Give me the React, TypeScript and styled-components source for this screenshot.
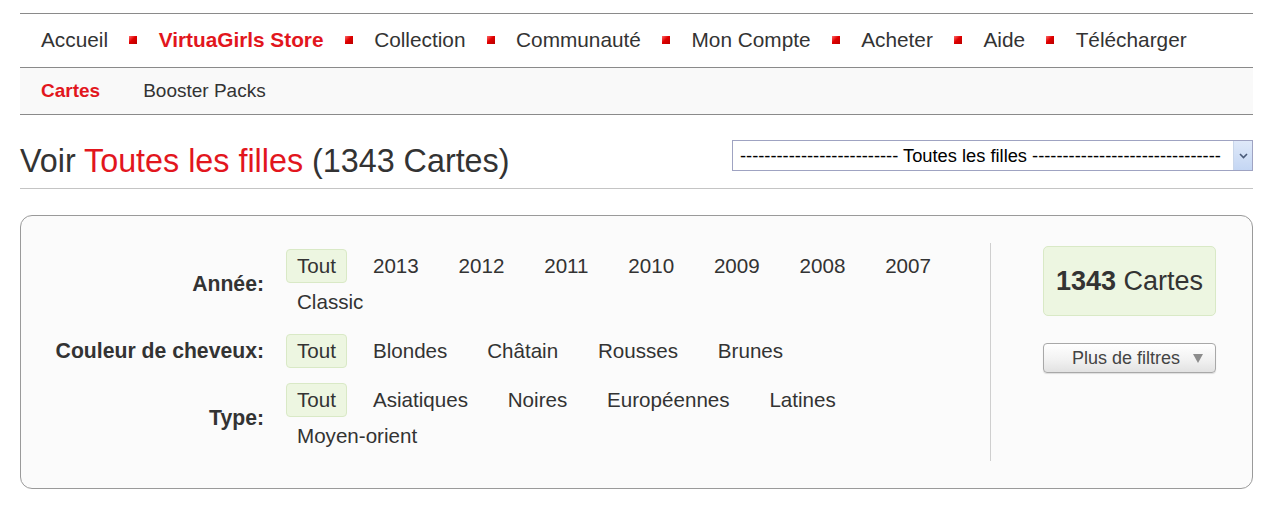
import React from "react";
import styled, { createGlobalStyle } from "styled-components";

const Global = createGlobalStyle`
  html, body { margin: 0; padding: 0; background: #ffffff; }
  body { font-family: "Liberation Sans", Arial, sans-serif; color: #333; }
  * { box-sizing: border-box; }
`;

const Page = styled.div`
  margin: 13px 13px 0 20px;
  width: 1233px;
`;

const MainNav = styled.ul`
  list-style: none;
  margin: 0;
  padding: 0 0 0 21px;
  height: 55px;
  display: flex;
  align-items: center;
  gap: 21.3px;
  border-top: 1px solid #8a8a8a;
  border-bottom: 1px solid #8a8a8a;
`;

const NavItem = styled.li<{ $active?: boolean }>`
  font-size: 20.8px;
  color: ${(p) => (p.$active ? "#e2161d" : "#333")};
  font-weight: ${(p) => (p.$active ? 700 : 400)};
  line-height: 1;
  white-space: nowrap;
`;

const Bullet = styled.li`
  width: 8px;
  height: 8px;
  margin-top: -1px;
  background: linear-gradient(135deg, #ff6b6b 0%, #e00000 45%, #b80000 100%);
`;

const SubNav = styled.ul`
  list-style: none;
  margin: 0;
  padding: 0 0 0 21px;
  height: 47px;
  display: flex;
  align-items: center;
  gap: 43px;
  background: #f9f9f9;
  border-bottom: 1px solid #8a8a8a;
`;

const SubItem = styled.li<{ $active?: boolean }>`
  font-size: 19px;
  color: ${(p) => (p.$active ? "#e2161d" : "#333")};
  font-weight: ${(p) => (p.$active ? 700 : 400)};
`;

const HeaderRow = styled.div`
  display: flex;
  justify-content: space-between;
  align-items: flex-start;
  border-bottom: 1px solid #c4c4c4;
`;

const Title = styled.h1`
  margin: 0;
  padding: 27px 0 8px 0;
  font-size: 32.3px;
  line-height: 38px;
  font-weight: 400;
  color: #333;
`;

const Red = styled.span`
  color: #e2161d;
`;

const SelectBox = styled.div`
  margin-top: 25px;
  width: 521px;
  height: 31px;
  border: 1px solid #9fa3c2;
  background: #fff;
  display: flex;
  align-items: center;
  justify-content: space-between;
  padding: 0 0 0 7px;
  font-size: 18.3px;
  color: #000;
  white-space: nowrap;
  overflow: hidden;
`;

const SelectText = styled.span`
  overflow: hidden;
`;

const SelectButton = styled.span`
  flex: none;
  width: 19px;
  height: 29px;
  background: linear-gradient(180deg, #dfe9f9 0%, #c4d6f3 100%);
  border-left: 1px solid #c9d6ea;
  display: flex;
  align-items: center;
  justify-content: center;
`;

const Panel = styled.div`
  margin-top: 26px;
  border: 1px solid #9a9a9a;
  border-radius: 12px;
  background: #fbfbfb;
  display: flex;
  padding: 27px 36px 27px 0;
`;

const Filters = styled.div`
  flex: 1;
  padding: 5px 0 7px 0;
  border-right: 1px solid #cfcfcf;
  display: flex;
  flex-direction: column;
  gap: 13px;
`;

const FilterRow = styled.div`
  display: grid;
  grid-template-columns: 243px 1fr;
  column-gap: 22px;
  padding-right: 15px;
`;

const Label = styled.div`
  align-self: center;
  text-align: right;
  font-size: 21.2px;
  font-weight: 700;
  color: #333;
  white-space: nowrap;
`;

const Options = styled.div`
  display: flex;
  flex-wrap: wrap;
`;

const Option = styled.span<{ $active?: boolean }>`
  height: 34px;
  line-height: 32px;
  margin: 1px ${(p) => (p.$active ? "15px" : "17.8px")} 1px 0;
  padding: 0 10px;
  font-size: 20.6px;
  color: #333;
  white-space: nowrap;
  border-radius: 4px;
  border: 1px solid ${(p) => (p.$active ? "#d9e9c6" : "transparent")};
  background: ${(p) => (p.$active ? "#edf6e1" : "transparent")};
`;

const Side = styled.div`
  margin-left: 52px;
  padding-top: 3px;
  width: 173px;
  display: flex;
  flex-direction: column;
  gap: 27px;
`;

const CountBox = styled.div`
  height: 70px;
  border: 1px solid #d9e9c6;
  background: #edf6e1;
  border-radius: 5px;
  display: flex;
  align-items: center;
  justify-content: center;
  font-size: 27px;
  color: #333;
  b { font-weight: 700; }
`;

const MoreButton = styled.button`
  height: 30px;
  border: 1px solid #a8a8a8;
  border-radius: 4px;
  background: linear-gradient(180deg, #ffffff 0%, #f2f2f2 55%, #e2e2e2 100%);
  font-family: "Liberation Sans", Arial, sans-serif;
  font-size: 18px;
  color: #444;
  display: flex;
  align-items: center;
  justify-content: flex-end;
  gap: 13px;
  padding: 0 12px 0 0;
  box-shadow: 0 1px 1px rgba(0, 0, 0, 0.12);
`;

const navItems = [
  "Accueil",
  "VirtuaGirls Store",
  "Collection",
  "Communauté",
  "Mon Compte",
  "Acheter",
  "Aide",
  "Télécharger",
];

const filters = [
  {
    label: "Année:",
    options: ["Tout", "2013", "2012", "2011", "2010", "2009", "2008", "2007", "Classic"],
  },
  {
    label: "Couleur de cheveux:",
    options: ["Tout", "Blondes", "Châtain", "Rousses", "Brunes"],
  },
  {
    label: "Type:",
    options: ["Tout", "Asiatiques", "Noires", "Européennes", "Latines", "Moyen-orient"],
  },
];

export default function App() {
  return (
    <Page>
      <Global />
      <MainNav>
        {navItems.map((item, i) => (
          <React.Fragment key={item}>
            {i > 0 && <Bullet />}
            <NavItem $active={item === "VirtuaGirls Store"}>{item}</NavItem>
          </React.Fragment>
        ))}
      </MainNav>
      <SubNav>
        <SubItem $active>Cartes</SubItem>
        <SubItem>Booster Packs</SubItem>
      </SubNav>
      <HeaderRow>
        <Title>
          Voir <Red>Toutes les filles</Red> (1343 Cartes)
        </Title>
        <SelectBox>
          <SelectText>
            {"-".repeat(26)} Toutes les filles {"-".repeat(31)}
          </SelectText>
          <SelectButton>
            <svg width="9" height="6" viewBox="0 0 9 6">
              <path d="M1 1 L4.5 4.5 L8 1" fill="none" stroke="#4a5a78" strokeWidth="1.6" />
            </svg>
          </SelectButton>
        </SelectBox>
      </HeaderRow>
      <Panel>
        <Filters>
          {filters.map((f) => (
            <FilterRow key={f.label}>
              <Label>{f.label}</Label>
              <Options>
                {f.options.map((o, i) => (
                  <Option key={o} $active={i === 0}>
                    {o}
                  </Option>
                ))}
              </Options>
            </FilterRow>
          ))}
        </Filters>
        <Side>
          <CountBox>
            <span>
              <b>1343</b> Cartes
            </span>
          </CountBox>
          <MoreButton>
            Plus de filtres
            <svg width="10" height="9" viewBox="0 0 10 9">
              <path d="M0 0 H10 L5 9 Z" fill="#8c8c8c" />
            </svg>
          </MoreButton>
        </Side>
      </Panel>
    </Page>
  );
}
